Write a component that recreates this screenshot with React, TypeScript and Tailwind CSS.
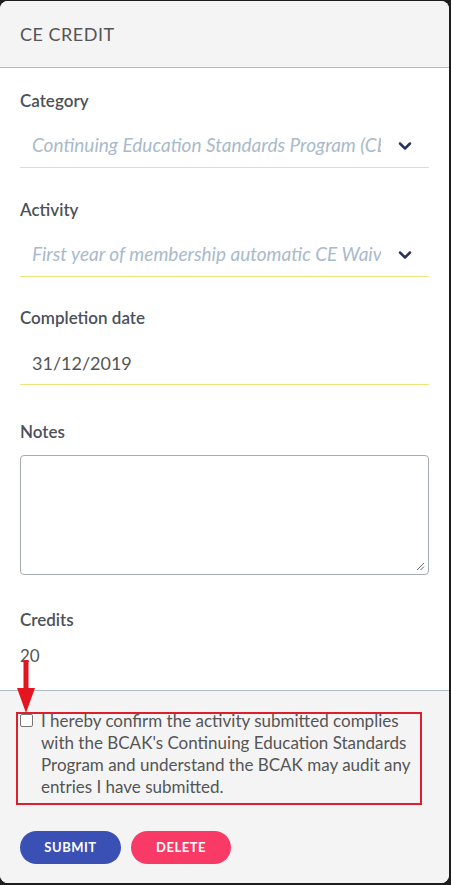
import { ChevronDown } from 'lucide-react';

const font = { fontFamily: 'Lato, "Open Sans", sans-serif' };

const Label = ({ children }: { children: string }) => (
  <div className="text-[17px] leading-6 font-semibold text-[#4b5159]">{children}</div>
);

const SelectField = ({ value }: { value: string }) => (
  <div className="mt-[11px] h-[44px] flex items-center border-b border-[#f0e27c]">
    <div className="w-[349px] ml-3 overflow-hidden whitespace-nowrap italic text-[19px] text-[#a9bacb]">
      {value}
    </div>
    <ChevronDown className="ml-auto mr-[14px] h-5 w-5 text-[#29335c]" strokeWidth={3} />
  </div>
);

export default function App() {
  return (
    <div className="w-[451px] h-[885px] bg-[#1e1e1e] pt-px pr-[2px] pb-[2px]" style={font}>
      <div className="h-full rounded-[8px] overflow-hidden flex flex-col bg-white">
        {/* header */}
        <div className="h-[67px] flex items-center px-5 bg-[#f4f4f4] border-b border-[#aebcc6]">
          <h1 className="text-[18px] tracking-[0.5px] text-[#555]">CE CREDIT</h1>
        </div>

        {/* form body */}
        <div className="px-5 pt-[21px] pb-[22px]">
          <Label>Category</Label>
          <SelectField value="Continuing Education Standards Program (CESP)" />

          <div className="mt-[30px]">
            <Label>Activity</Label>
            <SelectField value="First year of membership automatic CE Waiver" />
          </div>

          <div className="mt-[29px]">
            <Label>Completion date</Label>
            <div className="mt-[12px] h-[43px] flex items-center border-b border-[#f0e27c] pl-3 text-[18px] text-[#555]">
              31/12/2019
            </div>
          </div>

          <div className="mt-[35px]">
            <Label>Notes</Label>
            <div className="relative mt-[11px] h-[120px] rounded-[4px] border border-[#a3adb3] bg-white">
              <svg className="absolute right-[3px] bottom-[3px]" width="9" height="9" viewBox="0 0 9 9">
                <path d="M1 8 L8 1 M4.5 8 L8 4.5" stroke="#666" strokeWidth="1" />
              </svg>
            </div>
          </div>

          <div className="mt-[33px]">
            <Label>Credits</Label>
            <div className="mt-3 text-[17px] leading-6 text-[#555]">20</div>
          </div>
        </div>

        {/* footer */}
        <div className="relative flex-1 bg-[#f4f4f5] border-t border-[#aebcc6] px-5 pt-[19px]">
          <div className="flex items-start">
            <span className="mt-[4px] h-[13px] w-[13px] shrink-0 rounded-[2px] border border-[#767676] bg-white" />
            <p className="ml-2 text-[17px] leading-[22px] text-[#555]">
              I hereby confirm the activity submitted complies with the BCAK's Continuing Education Standards Program and understand the BCAK may audit any entries I have submitted.
            </p>
          </div>

          <div className="mt-[33px] flex gap-[10px]">
            <button className="h-[33px] w-[101px] rounded-full bg-[#3a50b4] text-white text-[13px] font-bold tracking-[0.5px]">
              SUBMIT
            </button>
            <button className="h-[33px] w-[100px] rounded-full bg-[#f93a66] text-white text-[13px] font-bold tracking-[0.5px]">
              DELETE
            </button>
          </div>

          {/* annotation overlay */}
          <div className="absolute left-[16px] top-[21px] w-[406px] h-[93px] border-2 border-[#dc1f2b] pointer-events-none" />
        </div>
      </div>

      {/* annotation arrow */}
      <svg className="absolute left-[17px] top-[660px] pointer-events-none" width="18" height="54" viewBox="0 0 18 54">
        <rect x="6.5" y="0" width="5" height="30" fill="#e3161f" />
        <polygon points="0,28 18,28 9,53" fill="#e3161f" />
      </svg>
    </div>
  );
}
